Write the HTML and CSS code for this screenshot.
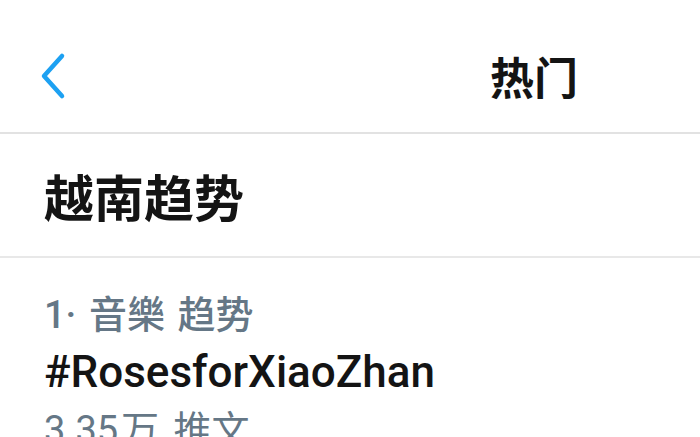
FILE: index.html
```html
<!DOCTYPE html>
<html lang="zh">
<head>
<meta charset="utf-8">
<link rel="stylesheet" href="styles.css">
</head>
<body>
<header class="nav">
  <button class="back" aria-label="返回">
    <svg width="30" height="48" viewBox="0 0 30 48"><path d="M24 4 L6 24 L24 44" fill="none" stroke="#1da1f2" stroke-width="4.5" stroke-linecap="round" stroke-linejoin="round"/></svg>
  </button>
  <h1 class="nav-title">热门</h1>
</header>
<section class="section-head">
  <h2>越南趋势</h2>
</section>
<article class="trend">
  <div class="meta"><span class="rank">1·</span> 音樂 趋势</div>
  <div class="tag">#RosesforXiaoZhan</div>
  <div class="count"><span class="num">3.35</span>万 推文</div>
</article>
</body>
</html>
```

FILE: styles.css
```css
html, body {
  margin: 0;
  padding: 0;
  background: #ffffff;
  font-family: "Roboto", "Noto Sans CJK SC", sans-serif;
  overflow: hidden;
  height: 437px;
}
.nav {
  height: 132px;
  display: flex;
  align-items: center;
  border-bottom: 2px solid #e2e2e2;
}
.back {
  border: 0;
  background: none;
  padding: 0;
  margin-left: 38px;
  margin-top: 20px;
  display: flex;
}
.nav-title {
  margin: 20px 122px 0 auto;
  font-size: 44px;
  font-weight: 600;
  color: #141414;
  font-family: "Noto Sans CJK SC", sans-serif;
  line-height: 1;
}
.section-head {
  height: 122px;
  display: flex;
  align-items: center;
  padding-left: 44px;
  border-bottom: 2px solid #e8e8e8;
}
.section-head h2 {
  margin: 0;
  font-size: 50px;
  font-weight: 700;
  color: #141414;
  font-family: "Noto Sans CJK SC", sans-serif;
  line-height: 1;
}
.trend {
  padding: 27px 0 0 44px;
}
.meta {
  font-size: 38px;
  font-weight: 500;
  color: #657786;
  font-family: "Noto Sans CJK SC", sans-serif;
  line-height: 54px;
  word-spacing: 4px;
}
.rank {
  font-family: "Roboto", sans-serif;
  font-weight: 500;
}
.tag {
  font-size: 44px;
  font-weight: 500;
  color: #141414;
  line-height: 60px;
  font-family: "Roboto", sans-serif;
}
.count {
  font-size: 38px;
  color: #657786;
  font-family: "Noto Sans CJK SC", sans-serif;
  line-height: 50px;
  word-spacing: 6px;
}
.num {
  font-family: "Roboto", sans-serif;
  margin-right: 3px;
}
```
